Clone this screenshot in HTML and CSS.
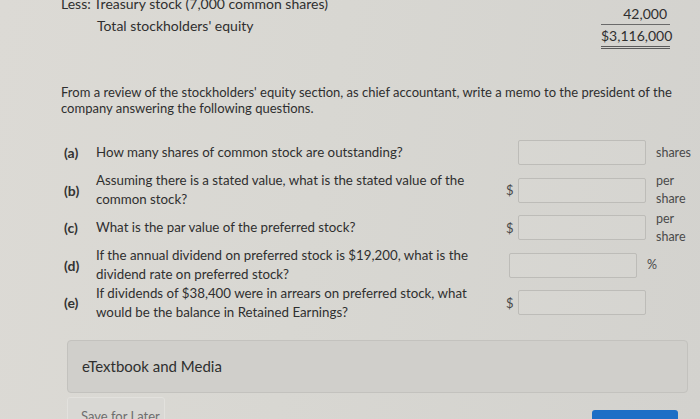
FILE: index.html
```html
<!DOCTYPE html>
<html lang="en">
<head>
<meta charset="utf-8">
<title>Stockholders' equity questions</title>
<link rel="stylesheet" href="styles.css">
</head>
<body>
<div class="page">
  <div class="equity">
    <div class="labels">
      <div class="eq-row">Less: Treasury stock (7,000 common shares)</div>
      <div class="eq-row indent">Total stockholders' equity</div>
    </div>
    <div class="amounts">
      <div class="amt single">42,000</div>
      <div class="amt double">$3,116,000</div>
    </div>
  </div>

  <p class="intro">From a review of the stockholders' equity section, as chief accountant, write a memo to the president of the<br>company answering the following questions.</p>

  <div class="questions">
    <div class="q">
      <span class="q-label">(a)</span>
      <span class="q-text">How many shares of common stock are outstanding?</span>
      <span class="cur"></span>
      <span class="field"></span>
      <span class="unit">shares</span>
    </div>
    <div class="q">
      <span class="q-label">(b)</span>
      <span class="q-text">Assuming there is a stated value, what is the stated value of the<br>common stock?</span>
      <span class="cur">$</span>
      <span class="field"></span>
      <span class="unit">per<br>share</span>
    </div>
    <div class="q">
      <span class="q-label">(c)</span>
      <span class="q-text">What is the par value of the preferred stock?</span>
      <span class="cur">$</span>
      <span class="field"></span>
      <span class="unit">per<br>share</span>
    </div>
    <div class="q">
      <span class="q-label">(d)</span>
      <span class="q-text">If the annual dividend on preferred stock is $19,200, what is the<br>dividend rate on preferred stock?</span>
      <span class="field shift"></span>
      <span class="unit">%</span>
    </div>
    <div class="q">
      <span class="q-label">(e)</span>
      <span class="q-text">If dividends of $38,400 were in arrears on preferred stock, what<br>would be the balance in Retained Earnings?</span>
      <span class="cur">$</span>
      <span class="field"></span>
      <span class="unit"></span>
    </div>
  </div>

  <div class="media">eTextbook and Media</div>

  <div class="actions">
    <div class="save">Save for Later</div>
    <div class="submit"></div>
  </div>
</div>
</body>
</html>
```

FILE: styles.css
```css
html, body {
  margin: 0;
  padding: 0;
  height: 419px;
  overflow: hidden;
}
body {
  font-family: Lato, "Open Sans", sans-serif;
  color: #2f2f2f;
  background: linear-gradient(100deg, #dcdad5 0%, #d8d7d2 45%, #d3d2ce 100%);
}
.page {
  padding-left: 61px;
}

/* equity summary */
.equity {
  display: flex;
  justify-content: space-between;
  width: 609px;
  margin-top: -7px;
  font-size: 14px;
}
.eq-row {
  line-height: 22px;
}
.eq-row.indent {
  padding-left: 36px;
}
.amounts {
  width: 69px;
  padding-top: 10px;
}
.amt {
  text-align: right;
  line-height: 21px;
  padding-right: 3px;
}
.amt.single {
  border-bottom: 1px solid #6a6a6a;
}
.amt.double {
  border-bottom: 3px double #5a5a5a;
}

/* intro paragraph */
.intro {
  margin: 35px 0 0;
  font-size: 13px;
  line-height: 16px;
}

/* questions */
.questions {
  margin-top: 18px;
  padding-left: 3px;
}
.q {
  display: flex;
  align-items: center;
  height: 37.5px;
  font-size: 13.3px;
}
.q-label {
  width: 32px;
  flex: none;
  font-size: 14px;
  font-weight: 700;
  color: #333;
}
.q-text {
  width: 410px;
  flex: none;
  line-height: 19px;
  white-space: nowrap;
}
.cur {
  width: 12px;
  flex: none;
  font-size: 13px;
  color: #4a4a4a;
}
.field {
  width: 126px;
  height: 23px;
  flex: none;
  border: 1px solid #bdbcb8;
  border-radius: 2px;
  background: rgba(255, 255, 255, 0.06);
}
.field.shift {
  margin-left: 3px;
}
.unit {
  margin-left: 10px;
  font-size: 12.5px;
  line-height: 18px;
  color: #4a4a4a;
}

/* eTextbook panel */
.media {
  margin: 18px 0 0 6px;
  width: 605px;
  height: 51px;
  padding-left: 14px;
  display: flex;
  align-items: center;
  font-size: 15px;
  color: #2f2f2f;
  background: #d0cfcb;
  border: 1px solid #c3c2be;
  border-radius: 4px;
}

/* bottom actions */
.actions {
  display: flex;
  justify-content: space-between;
  align-items: flex-start;
  margin: 4px 0 0 6px;
  width: 611px;
}
.save {
  width: 98px;
  height: 30px;
  padding: 10px 0 0 13px;
  box-sizing: border-box;
  font-size: 13px;
  color: #6e6e6e;
  border: 1px solid #e2e1dd;
  border-radius: 3px;
  background: #d9d8d4;
}
.submit {
  width: 86px;
  height: 30px;
  margin-top: 13px;
  background: #1d6fc6;
  border-radius: 3px;
}
```
